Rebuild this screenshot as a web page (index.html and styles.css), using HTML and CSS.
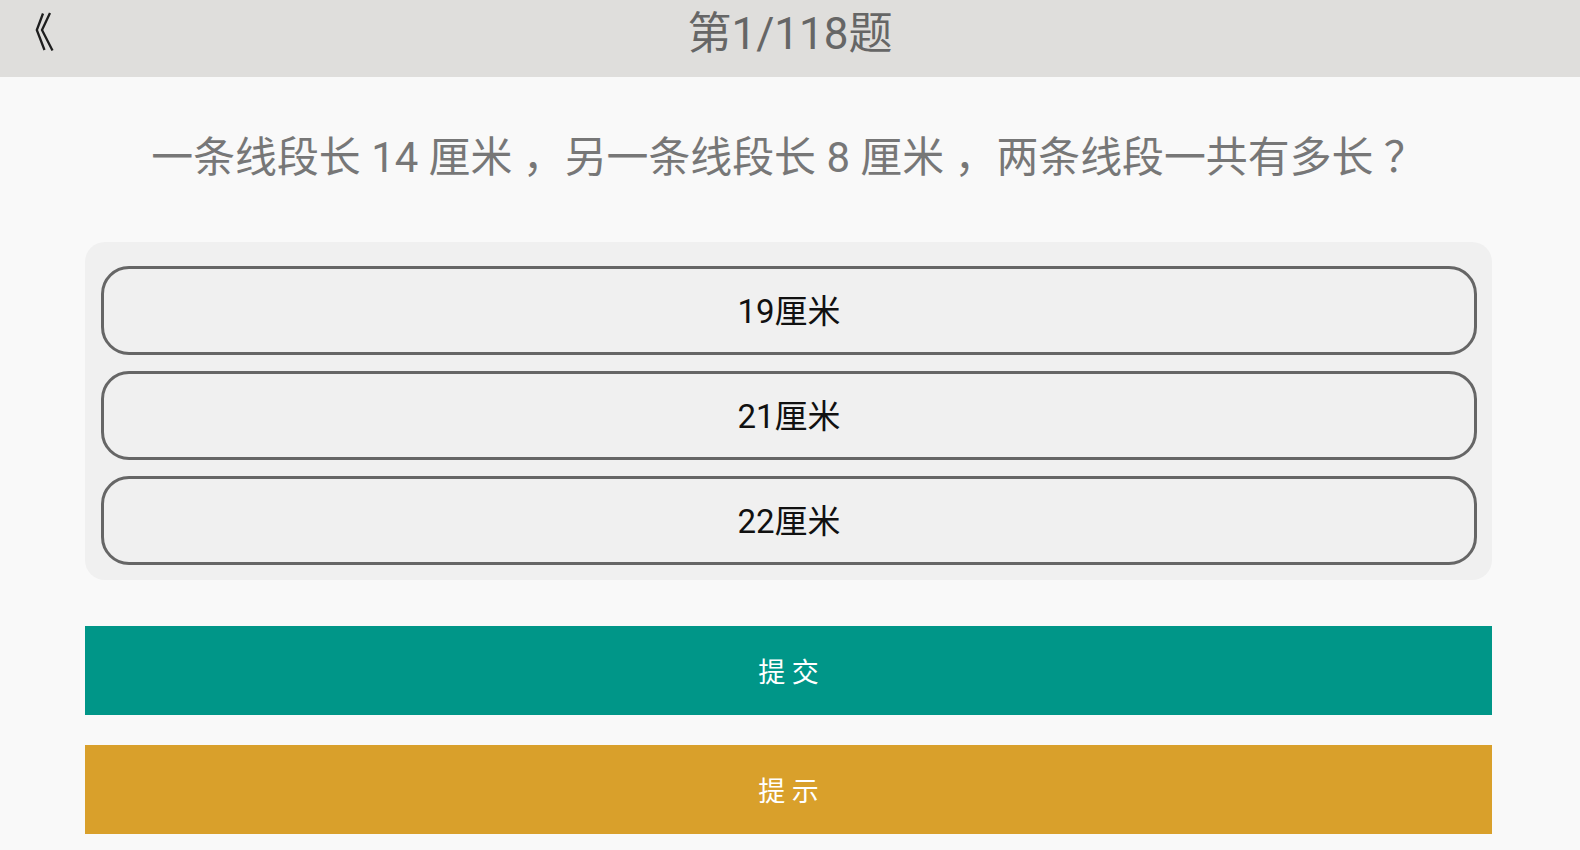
FILE: index.html
```html
<!DOCTYPE html>
<html lang="zh-CN">
<head>
<meta charset="utf-8">
<title>第1/118题</title>
<link rel="stylesheet" href="styles.css">
</head>
<body>
<div class="app">
  <header class="topbar">
    <div class="back">
      <svg width="20" height="40" viewBox="0 0 20 40" class="back-icon">
        <polyline points="8,1.5 1.8,18 9.5,38" fill="none" stroke="#1e1e1e" stroke-width="2.3"/>
        <polyline points="15,1 7,18 17.5,38.5" fill="none" stroke="#1e1e1e" stroke-width="2.3"/>
      </svg>
    </div>
    <div class="title">第1/118题</div>
    <div></div>
  </header>
  <main class="main">
    <p class="question">一条线段长 14 厘米 ，另一条线段长 8 厘米 ，两条线段一共有多长 ？</p>
    <div class="options">
      <div class="option">19厘米</div>
      <div class="option">21厘米</div>
      <div class="option">22厘米</div>
    </div>
    <div class="btn btn-submit">提 交</div>
    <div class="btn btn-hint">提 示</div>
  </main>
</div>
</body>
</html>
```
FILE: styles.css
```css
html, body {
  margin: 0;
  padding: 0;
  background: #f9f9f9;
}
body {
  font-family: Roboto, "Noto Sans CJK SC", sans-serif;
  width: 1580px;
  height: 850px;
  overflow: hidden;
}
.topbar {
  height: 77px;
  background: #dfdedc;
  display: grid;
  grid-template-columns: 1fr auto 1fr;
  align-items: start;
}
.back {
  padding-left: 35px;
  padding-top: 12px;
  display: flex;
}
.title {
  font-size: 44px;
  color: #666;
  line-height: 68px;
}
.main {
  padding: 0 88px 0 85px;
}
.question {
  margin: 0;
  padding-top: 53px;
  height: 56px;
  line-height: 56px;
  font-size: 41.9px;
  color: #777;
  text-align: center;
  white-space: nowrap;
}
.options {
  margin-top: 56px;
  background: #f0f0f0;
  border-radius: 20px;
  padding: 24px 15px 15px 16px;
  display: flex;
  flex-direction: column;
  gap: 16px;
}
.option {
  height: 89px;
  box-sizing: border-box;
  border: 3px solid #666;
  border-radius: 28px;
  display: flex;
  align-items: center;
  justify-content: center;
  font-size: 33px;
  color: #111;
  padding-bottom: 3px;
}
.btn {
  height: 89px;
  display: flex;
  align-items: center;
  justify-content: center;
  color: #fff;
  font-size: 27px;
}
.btn-submit {
  margin-top: 46px;
  background: #009688;
}
.btn-hint {
  margin-top: 30px;
  background: #d9a02b;
}
```
